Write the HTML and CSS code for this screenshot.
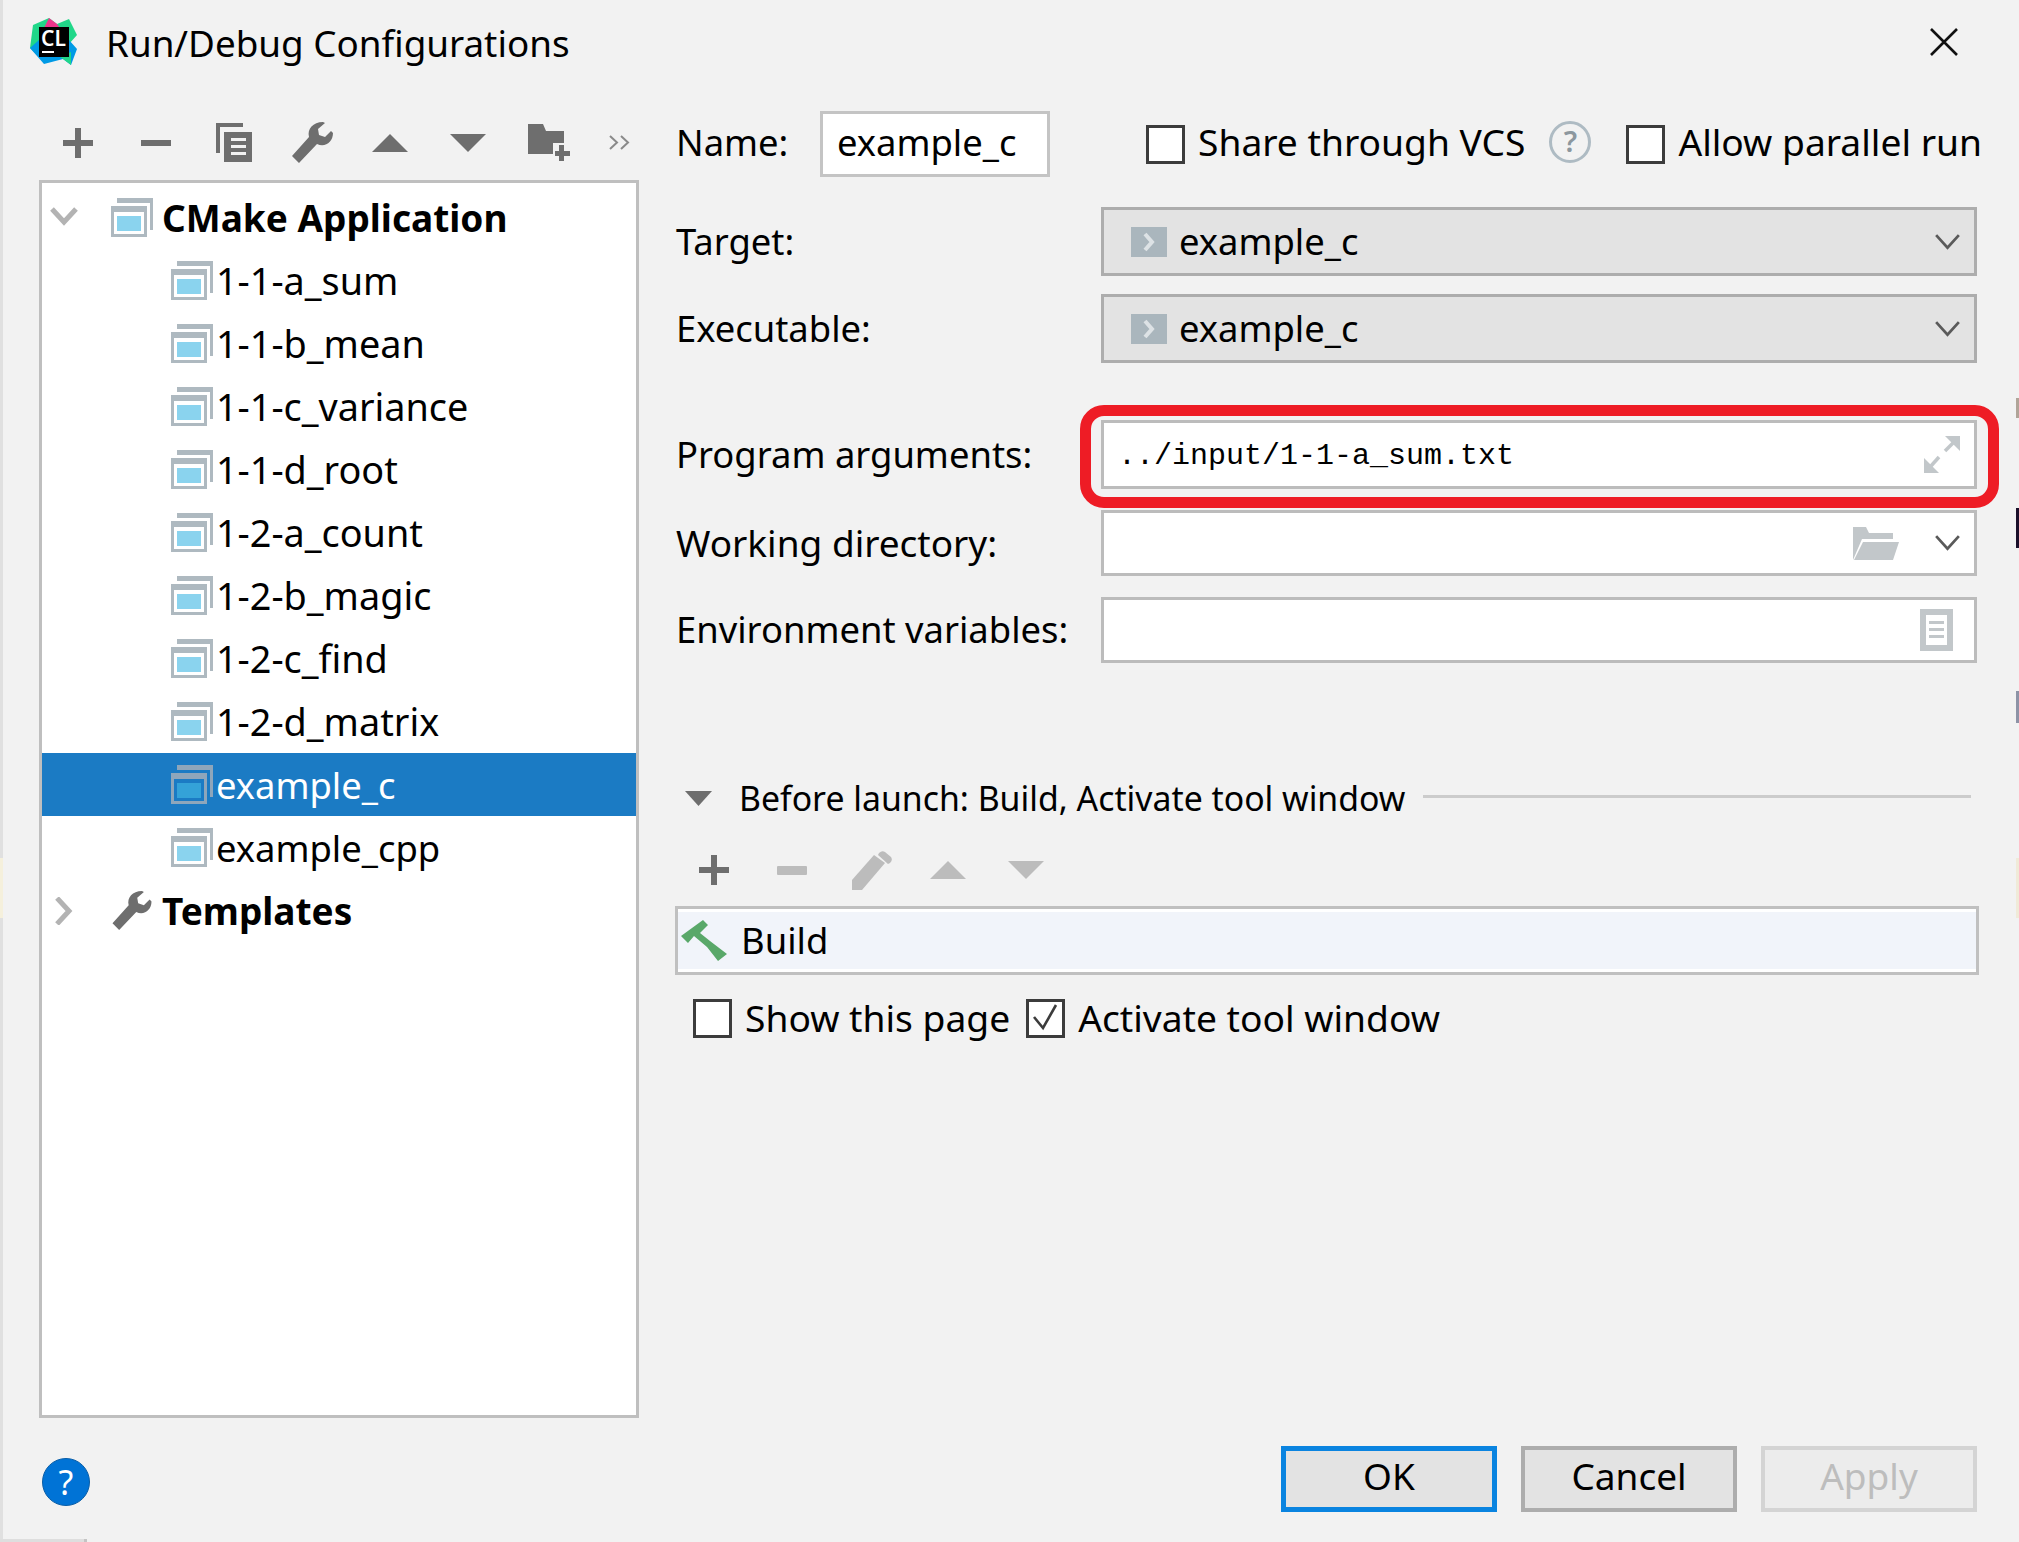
FILE: index.html
```html
<!DOCTYPE html>
<html lang="en">
<head>
  <meta charset="UTF-8">
  <title>Run/Debug Configurations</title>
  <link rel="stylesheet" href="styles.css">
</head>
<body>

<svg class="defs" width="0" height="0">
  <symbol id="cfg" viewBox="0 0 42 39">
    <path fill="#aeb9c0" d="M6 0H42V32H39V5H6Z"/>
    <rect fill="#aeb9c0" y="8" width="36" height="31"/>
    <rect fill="#fff" x="3" y="14" width="30" height="22"/>
    <rect fill="#8ad3ee" x="6" y="18" width="24" height="15"/>
  </symbol>
  <symbol id="cfg-sel" viewBox="0 0 42 39">
    <path fill="#8ea6bb" d="M6 0H42V32H39V5H6Z"/>
    <rect fill="#8ea6bb" y="8" width="36" height="31"/>
    <rect fill="#1b7bc4" x="3" y="14" width="30" height="22"/>
    <rect fill="#34a2d8" x="6" y="18" width="24" height="15"/>
  </symbol>
  <symbol id="wrench" viewBox="0 0 41 41">
    <path fill="#6e6e6e" d="M0 34L17 15C15 7 21 0 31 0L33 1L26 7L27 13L33 15L39 9L41 11C41 20 33 26 25 22L7 41Z"/>
  </symbol>
  <symbol id="chev-down" viewBox="0 0 22 14">
    <path fill="none" stroke="#5a5a5a" stroke-width="2.4" d="M1 1L11 12L21 1"/>
  </symbol>
  <symbol id="exec" viewBox="0 0 36 30">
    <rect fill="#aab6bd" width="36" height="30"/>
    <path fill="none" stroke="#dde2e5" stroke-width="4" d="M14 7L21 15L14 23"/>
  </symbol>
</svg>

<div class="dialog">
  <!-- title bar -->
  <header class="titlebar">
    <svg class="logo" viewBox="0 0 48 48">
      <path fill="#21d789" d="M0 30L3 7L19 0L27 6L39 1L47 17L39 26L9 39Z"/>
      <path fill="#ed358c" d="M19 0L27 6L30 10H14Z"/>
      <path fill="#009ae5" d="M0 30L9 22H39L47 31L41 47L33 41L14 46Z"/>
      <path fill="#21d789" d="M30 39L41 34L41 47L33 41Z"/>
      <rect x="9" y="9" width="30" height="30" fill="#000"/>
      <rect x="12" y="33" width="12" height="2" fill="#fff"/>
    </svg>
    <span class="logo-text">CL</span>
    <h1 class="title">Run/Debug Configurations</h1>
    <svg class="close" viewBox="0 0 28 28"><path stroke="#111" stroke-width="2.6" d="M1 1L27 27M27 1L1 27"/></svg>
  </header>

  <div class="main">
    <!-- left side -->
    <aside class="left">
      <div class="toolbar">
        <svg class="tb tb-plus" viewBox="0 0 30 30"><path fill="#6e6e6e" d="M12 0h6v12h12v6H18v12h-6V18H0v-6h12z"/></svg>
        <svg class="tb tb-minus" viewBox="0 0 30 6"><rect fill="#6e6e6e" width="30" height="6"/></svg>
        <svg class="tb tb-copy" viewBox="0 0 36 39">
          <path fill="#6e6e6e" d="M0 0H27V4H4V30H0Z"/>
          <path fill="#6e6e6e" d="M8 9H36V39H8Z"/>
          <path fill="#f2f2f2" d="M15 15H30V18H15ZM15 22H30V25H15ZM15 29H30V32H15Z"/>
        </svg>
        <svg class="tb tb-wrench"><use href="#wrench"/></svg>
        <svg class="tb tb-tri" viewBox="0 0 36 18"><path fill="#6e6e6e" d="M18 0L36 18H0Z"/></svg>
        <svg class="tb tb-tri tb-tri-down" viewBox="0 0 36 18"><path fill="#6e6e6e" d="M0 0H36L18 18Z"/></svg>
        <svg class="tb tb-folder" viewBox="0 0 42 37">
          <path fill="#6e6e6e" d="M0 0H15L18 7H36V19H25V30H0Z"/>
          <path fill="#6e6e6e" d="M31 21h5v6h6v5h-6v5h-5v-5h-4v-5h4z"/>
        </svg>
        <svg class="tb tb-more" viewBox="0 0 21 15"><path fill="none" stroke="#8a8a8a" stroke-width="2" d="M1 1L8 7.5L1 14M12 1L19 7.5L12 14"/></svg>
      </div>

      <div class="tree">
        <div class="row row-root">
          <svg class="arrow" viewBox="0 0 28 28"><path fill="none" stroke="#b3b3b3" stroke-width="5" d="M2 5L14 18L26 5"/></svg>
          <svg class="cfg-icon"><use href="#cfg"/></svg>
          <span class="row-bold">CMake Application</span>
        </div>
        <div class="row row-child row-num"><svg class="cfg-icon"><use href="#cfg"/></svg><span>1-1-a_sum</span></div>
        <div class="row row-child row-num"><svg class="cfg-icon"><use href="#cfg"/></svg><span>1-1-b_mean</span></div>
        <div class="row row-child row-num"><svg class="cfg-icon"><use href="#cfg"/></svg><span>1-1-c_variance</span></div>
        <div class="row row-child row-num"><svg class="cfg-icon"><use href="#cfg"/></svg><span>1-1-d_root</span></div>
        <div class="row row-child row-num"><svg class="cfg-icon"><use href="#cfg"/></svg><span>1-2-a_count</span></div>
        <div class="row row-child row-num"><svg class="cfg-icon"><use href="#cfg"/></svg><span>1-2-b_magic</span></div>
        <div class="row row-child row-num"><svg class="cfg-icon"><use href="#cfg"/></svg><span>1-2-c_find</span></div>
        <div class="row row-child row-num"><svg class="cfg-icon"><use href="#cfg"/></svg><span>1-2-d_matrix</span></div>
        <div class="row row-child selected"><svg class="cfg-icon"><use href="#cfg-sel"/></svg><span>example_c</span></div>
        <div class="row row-child"><svg class="cfg-icon"><use href="#cfg"/></svg><span>example_cpp</span></div>
        <div class="row row-root">
          <svg class="arrow" viewBox="0 0 28 28"><path fill="none" stroke="#b3b3b3" stroke-width="5" d="M7 1L19 14L7 27"/></svg>
          <svg class="cfg-icon"><use href="#wrench"/></svg>
          <span class="row-bold">Templates</span>
        </div>
      </div>
    </aside>

    <!-- right side -->
    <section class="right">
      <div class="name-row">
        <label class="name-label">Name:</label>
        <div class="name-input">example_c</div>
        <span class="check check-share"></span>
        <span class="check-text">Share through VCS</span>
        <span class="hint">?</span>
        <span class="check"></span>
        <span class="check-text">Allow parallel run</span>
      </div>

      <div class="form-row row-target">
        <label>Target:</label>
        <div class="combo">
          <svg class="exec-icon"><use href="#exec"/></svg>
          <span>example_c</span>
          <svg class="combo-chev"><use href="#chev-down"/></svg>
        </div>
      </div>
      <div class="form-row row-exec">
        <label>Executable:</label>
        <div class="combo">
          <svg class="exec-icon"><use href="#exec"/></svg>
          <span>example_c</span>
          <svg class="combo-chev"><use href="#chev-down"/></svg>
        </div>
      </div>
      <div class="form-row row-args">
        <label>Program arguments:</label>
        <div class="field args-field">
          <span class="args-text">../input/1-1-a_sum.txt</span>
          <svg class="expand" viewBox="0 0 36 37">
            <path fill="#c2c7ca" d="M36 0H21L36 15Z"/>
            <path fill="none" stroke="#c2c7ca" stroke-width="3.5" d="M29 7L21 15"/>
            <path fill="#c2c7ca" d="M0 37V22L15 37Z"/>
            <path fill="none" stroke="#c2c7ca" stroke-width="3.5" d="M7 30L15 21"/>
          </svg>
          <div class="callout"></div>
        </div>
      </div>
      <div class="form-row row-dir">
        <label class="label-wide">Working directory:</label>
        <div class="field">
          <svg class="folder-open" viewBox="0 0 46 33">
            <path fill="#c2c7ca" d="M0 0H13L16 6H40V12H9L0 33Z"/>
            <path fill="#c2c7ca" d="M10 15H46L40 33H1Z"/>
          </svg>
          <svg class="combo-chev"><use href="#chev-down"/></svg>
        </div>
      </div>
      <div class="form-row row-env">
        <label>Environment variables:</label>
        <div class="field">
          <svg class="doc" viewBox="0 0 33 42">
            <path fill="#c2c7ca" d="M0 0H33V42H0ZM6 6V36H27V6Z"/>
            <path fill="#c2c7ca" d="M9 12H24V15H9ZM9 19H24V22H9ZM9 26H24V29H9Z"/>
          </svg>
        </div>
      </div>

      <div class="before-head">
        <svg class="before-tri" viewBox="0 0 27 15"><path fill="#6e6e6e" d="M0 0H27L13.5 15Z"/></svg>
        <span>Before launch: Build, Activate tool window</span>
        <div class="before-line"></div>
      </div>

      <div class="before-tools">
        <svg class="bt-plus" viewBox="0 0 30 30"><path fill="#6e6e6e" d="M12 0h6v12h12v6H18v12h-6V18H0v-6h12z"/></svg>
        <svg class="bt-minus" viewBox="0 0 30 9"><rect fill="#bcbcbc" width="30" height="9" rx="1"/></svg>
        <svg class="bt-pencil" viewBox="0 0 40 39">
          <path fill="#bcbcbc" d="M0 29L22 4L33 12L10 39H0Z"/>
          <path fill="#bcbcbc" d="M27 2Q30 -1 33 1L39 6Q41 9 38 12L36 13L26 4Z"/>
        </svg>
        <svg class="bt-tri" viewBox="0 0 36 18"><path fill="#bcbcbc" d="M18 0L36 18H0Z"/></svg>
        <svg class="bt-tri bt-down" viewBox="0 0 36 18"><path fill="#bcbcbc" d="M0 0H36L18 18Z"/></svg>
      </div>

      <div class="build-list">
        <div class="build-item">
          <svg class="hammer" viewBox="0 0 46 42">
            <path fill="#59a869" d="M0 16L22 0L27 5L19 13L29 21L46 34L37 41L26 27L13 16L7 23Z"/>
          </svg>
          <span>Build</span>
        </div>
      </div>

      <div class="options">
        <span class="check"></span>
        <span class="check-text">Show this page</span>
        <span class="check check-on">
          <svg viewBox="0 0 33 33"><path fill="none" stroke="#3c3c3c" stroke-width="2.6" d="M5 15L14 26L27 3"/></svg>
        </span>
        <span class="check-text">Activate tool window</span>
      </div>
    </section>
  </div>

  <footer class="footer">
    <div class="help">?</div>
    <div class="btn btn-ok">OK</div>
    <div class="btn">Cancel</div>
    <div class="btn btn-off">Apply</div>
  </footer>
</div>

<!-- bits of the desktop behind the dialog -->
<div class="edge edge-bottom"></div>
<div class="edge edge-cursor"></div>
<div class="edge edge-mark"></div>
<div class="edge edge-blue"></div>
<div class="edge edge-pale-r"></div>
<div class="edge edge-pale-l"></div>

</body>
</html>
```

FILE: styles.css
```css
/* base */
html, body {
  margin: 0;
  padding: 0;
}

body {
  width: 2019px;
  height: 1542px;
  overflow: hidden;
  position: relative;
  font-family: "Noto Sans", sans-serif;
  font-size: 36.4px;
  color: #000;
  background: #f2f2f2;
}

.defs {
  position: absolute;
}

.dialog {
  width: 2019px;
  height: 1539px;
  box-sizing: border-box;
  border-left: 3px solid #e0e0e0;
  background: #f2f2f2;
  display: flex;
  flex-direction: column;
}

/* title bar */
.titlebar {
  height: 105px;
  flex: none;
  position: relative;
  display: flex;
  align-items: flex-start;
}

.logo {
  width: 48px;
  height: 48px;
  margin: 18px 0 0 27px;
  flex: none;
}

.logo-text {
  position: absolute;
  left: 38px;
  top: 26px;
  color: #fff;
  font-size: 21px;
  font-weight: 600;
  line-height: 24px;
}

.title {
  margin: 16px 0 0 28px;
  font-size: 36.8px;
  font-weight: 400;
  line-height: 54px;
}

.close {
  width: 28px;
  height: 28px;
  margin: 28px 61px 0 auto;
}

/* left side */
.main {
  flex: 1;
  display: flex;
  min-height: 0;
}

.left {
  width: 600px;
  margin-left: 36px;
  flex: none;
  display: flex;
  flex-direction: column;
}

.toolbar {
  height: 75px;
  flex: none;
  display: flex;
  align-items: center;
  position: relative;
}

.tb {
  flex: none;
  display: block;
}

.tb-plus { width: 30px; height: 30px; margin-left: 24px; }
.tb-minus { width: 30px; height: 6px; margin-left: 48px; }
.tb-copy { width: 36px; height: 39px; margin-left: 45px; }
.tb-wrench { width: 41px; height: 41px; margin-left: 40px; }
.tb-tri { width: 36px; height: 18px; margin-left: 39px; }
.tb-tri-down { margin-left: 42px; }
.tb-folder { width: 42px; height: 37px; margin-left: 42px; }
.tb-more { width: 21px; height: 15px; margin-left: 39px; }

.tree {
  flex: none;
  height: 1238px;
  box-sizing: border-box;
  border: 3px solid #bfbfbf;
  background: #fff;
  padding-top: 3px;
}

.row {
  height: 63px;
  display: flex;
  align-items: center;
  white-space: nowrap;
}

.row-root {
  padding-left: 8px;
}

.row-child {
  padding-left: 129px;
}

.row-bold {
  font-size: 37px;
  font-weight: 700;
  margin-left: 9px;
}

.row-child span {
  margin-left: 3px;
}

.row-num {
  font-size: 37.8px;
}

.arrow {
  width: 28px;
  height: 28px;
  margin-right: 33px;
  flex: none;
}

.cfg-icon {
  width: 42px;
  height: 39px;
  flex: none;
}

.selected {
  background: #1b7bc4;
  color: #fff;
}

/* right side */
.right {
  width: 1301px;
  margin-left: 37px;
  flex: none;
  padding-top: 6px;
}

.name-row {
  height: 66px;
  display: flex;
  align-items: center;
}

.name-label {
  width: 144px;
  flex: none;
  margin-top: -5px;
}

.name-input {
  width: 230px;
  height: 66px;
  box-sizing: border-box;
  border: 3px solid #c4c4c4;
  background: #fff;
  padding-left: 14px;
  line-height: 56px;
  flex: none;
}

.check {
  width: 39px;
  height: 39px;
  box-sizing: border-box;
  border: 3px solid #3c3c3c;
  background: #fff;
  flex: none;
  display: block;
}

.check svg {
  display: block;
}

.check-share {
  margin-left: 96px;
}

.check-text {
  margin-left: 13px;
  flex: none;
  white-space: nowrap;
  font-size: 37.2px;
}

.name-row .check-text {
  margin-top: -5px;
}

.hint {
  width: 42px;
  height: 42px;
  box-sizing: border-box;
  border: 3px solid #aebbc3;
  border-radius: 50%;
  margin: -4px 35px 0 24px;
  color: #8c979e;
  font-size: 29px;
  font-weight: 600;
  line-height: 34px;
  text-align: center;
  flex: none;
}

.form-row {
  display: grid;
  grid-template-columns: 425px 1fr;
  align-items: center;
}

.form-row label {
  margin-top: -2px;
}

.label-wide {
  font-size: 37px;
}

.row-target { margin-top: 30px; }
.row-exec { margin-top: 18px; }
.row-args { margin-top: 57px; }
.row-dir { margin-top: 21px; }
.row-env { margin-top: 21px; }

.combo {
  height: 69px;
  box-sizing: border-box;
  border: 3px solid #adadad;
  background: #e3e3e3;
  display: flex;
  align-items: center;
  padding-left: 27px;
}

.combo span {
  margin-top: -2px;
}

.exec-icon {
  width: 36px;
  height: 30px;
  margin-right: 12px;
  flex: none;
}

.combo-chev {
  width: 25px;
  height: 16px;
  margin-left: auto;
  margin-right: 14px;
  flex: none;
}

.field {
  height: 66px;
  box-sizing: border-box;
  border: 3px solid #bcbcbc;
  background: #fff;
  display: flex;
  align-items: center;
  position: relative;
}

.args-field {
  height: 69px;
  padding-left: 14px;
}

.args-text {
  font-family: "Liberation Mono", monospace;
  font-size: 30px;
  white-space: nowrap;
  padding-top: 3px;
}

.expand {
  width: 36px;
  height: 37px;
  margin-left: auto;
  margin-right: 14px;
}

/* red annotation drawn over the screenshot */
.callout {
  position: absolute;
  left: -24px;
  right: -25px;
  top: -18px;
  bottom: -22px;
  border: 11px solid #ee1c25;
  border-radius: 24px;
}

.folder-open {
  width: 46px;
  height: 33px;
  margin-left: auto;
  flex: none;
}

.folder-open + .combo-chev {
  margin-left: 36px;
}

.doc {
  width: 33px;
  height: 42px;
  margin-left: auto;
  margin-right: 21px;
}

.before-head {
  margin-top: 120px;
  height: 30px;
  display: flex;
  align-items: center;
  font-size: 33.8px;
  white-space: nowrap;
  margin-left: 9px;
  margin-right: 6px;
}

.before-tri {
  width: 27px;
  height: 15px;
  margin-right: 27px;
  flex: none;
}

.before-line {
  flex: 1;
  height: 3px;
  margin: -3px 0 0 18px;
  background: #cccccc;
}

.before-tools {
  margin-top: 36px;
  height: 42px;
  display: flex;
  align-items: center;
  padding-left: 23px;
}

.bt-plus { width: 30px; height: 30px; flex: none; }
.bt-minus { width: 30px; height: 9px; margin-left: 48px; flex: none; }
.bt-pencil { width: 40px; height: 39px; margin-left: 45px; flex: none; }
.bt-tri { width: 36px; height: 18px; margin-left: 38px; flex: none; }
.bt-down { margin-left: 42px; }

.build-list {
  margin: 15px -2px 0 -1px;
  height: 69px;
  box-sizing: border-box;
  border: 3px solid #c0c0c0;
  background: #fff;
  padding: 3px 0;
}

.build-item {
  height: 57px;
  background: #f1f4fa;
  display: flex;
  align-items: center;
  padding-left: 3px;
}

.build-item span {
  margin-top: -2px;
}

.hammer {
  width: 46px;
  height: 42px;
  margin-right: 14px;
  flex: none;
}

.options {
  margin-top: 24px;
  height: 39px;
  display: flex;
  align-items: center;
  padding-left: 17px;
}

.options .check-text {
  margin-top: -2px;
}

.options .check-on {
  margin-left: 16px;
}

/* footer */
.footer {
  height: 121px;
  box-sizing: border-box;
  flex: none;
  display: flex;
  align-items: flex-start;
  padding: 28px 42px 0 39px;
  gap: 24px;
}

.help {
  width: 48px;
  height: 48px;
  margin: 12px auto 0 0;
  box-sizing: border-box;
  border: 1px solid #0a5ea8;
  border-radius: 50%;
  background: #0073d6;
  color: #fff;
  font-size: 34px;
  line-height: 46px;
  text-align: center;
}

.btn {
  width: 216px;
  height: 66px;
  box-sizing: border-box;
  border: 4px solid #adadad;
  background: #e3e3e3;
  font-size: 37px;
  line-height: 52px;
  text-align: center;
  flex: none;
}

.btn-ok {
  border: 5px solid #0a84e0;
  line-height: 50px;
}

.btn-off {
  border-color: #d4d4d4;
  background: #ececec;
  color: #bdbdbd;
}

/* edges of the screenshot */
.edge {
  position: absolute;
}

.edge-bottom {
  left: 0;
  top: 1539px;
  width: 84px;
  height: 3px;
  background: #dedede;
  border-right: 3px solid #c4c4c4;
}

.edge-cursor {
  left: 2016px;
  top: 508px;
  width: 3px;
  height: 40px;
  background: #1a0f2a;
}

.edge-mark {
  left: 2016px;
  top: 398px;
  width: 3px;
  height: 20px;
  background: #b0a498;
}

.edge-blue {
  left: 2016px;
  top: 691px;
  width: 3px;
  height: 32px;
  background: #8d93a6;
}

.edge-pale-r {
  left: 2016px;
  top: 858px;
  width: 3px;
  height: 60px;
  background: #f0ead8;
}

.edge-pale-l {
  left: 0;
  top: 858px;
  width: 3px;
  height: 60px;
  background: #f5f0dc;
}
```
